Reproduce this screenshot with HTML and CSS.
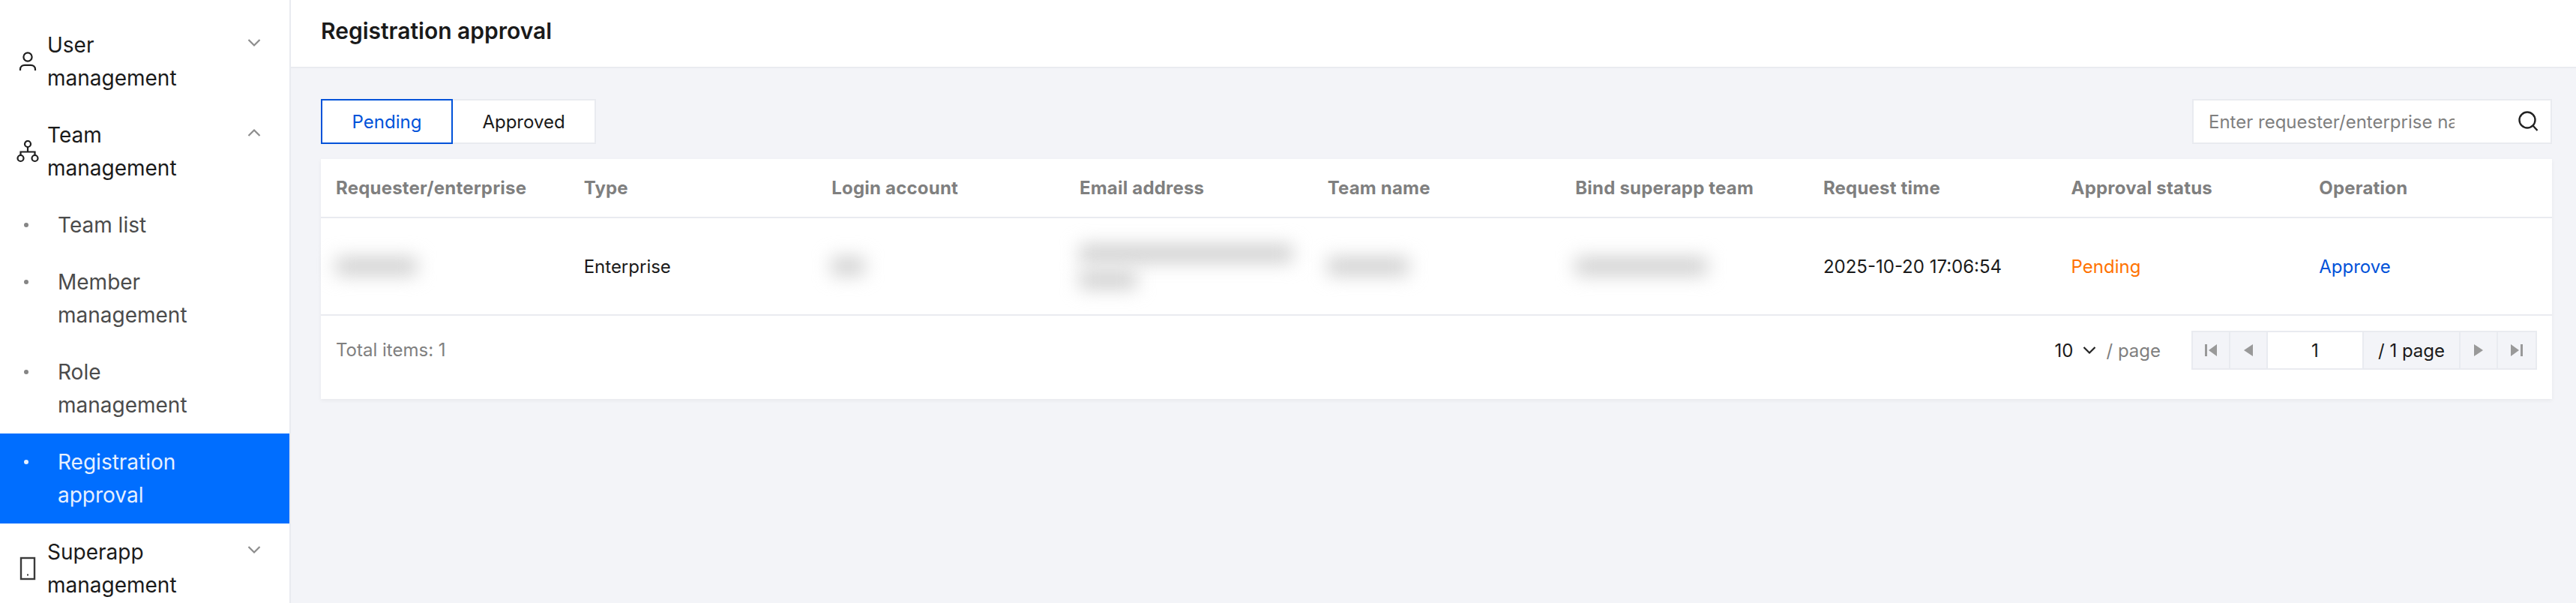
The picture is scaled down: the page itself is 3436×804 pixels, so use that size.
FILE: index.html
```html
<!DOCTYPE html>
<html lang="en">
<head>
  <meta charset="UTF-8" />
  <title>Registration approval</title>
  <link rel="stylesheet" href="styles.css">
</head>
<body>
  <div class="layout">
    <aside class="sidebar">
      <div class="group">
        <svg class="groupIcon" width="28" height="28" viewBox="0 0 28 28" fill="none" stroke="#1f1f1f" stroke-width="2.2"><circle cx="14" cy="8" r="5.6"/><path d="M4 26v-1.5c0-3.6 2.6-5.6 6-5.6h8c3.4 0 6 2 6 5.6V26"/></svg>
        <span class="groupText">User management</span>
        <svg class="chevron" width="18" height="12" viewBox="0 0 18 12" fill="none" stroke="#8c8c8c" stroke-width="2.2"><path d="M1.5 2l7.5 7.500L16.500 2"/></svg>
      </div>
      <div class="group">
        <svg class="groupIcon" width="30" height="30" viewBox="0 0 30 30" fill="none" stroke="#1f1f1f" stroke-width="2.2"><circle cx="15" cy="5" r="4"/><circle cx="5.500" cy="24" r="4"/><circle cx="24.500" cy="24" r="4"/><path d="M15 9v6M5.500 20v-4.500h19V20"/></svg>
        <span class="groupText">Team management</span>
        <svg class="chevron" width="18" height="12" viewBox="0 0 18 12" fill="none" stroke="#8c8c8c" stroke-width="2.2"><path d="M1.500 10L9 2.500l7.500 7.500"/></svg>
      </div>
      <div class="subItem"><i class="dot"></i><span class="subText">Team list</span></div>
      <div class="subItem"><i class="dot"></i><span class="subText">Member management</span></div>
      <div class="subItem"><i class="dot"></i><span class="subText">Role management</span></div>
      <div class="subItem active"><i class="dot"></i><span class="subText">Registration approval</span></div>
      <div class="group">
        <svg class="groupIcon" width="28" height="32" viewBox="0 0 28 32" fill="none" stroke="#3a3a3a" stroke-width="2.400"><rect x="5" y="2" width="18" height="28"/><rect x="13" y="23.500" width="2" height="2" fill="#3a3a3a" stroke="none"/></svg>
        <span class="groupText">Superapp management</span>
        <svg class="chevron" width="18" height="12" viewBox="0 0 18 12" fill="none" stroke="#8c8c8c" stroke-width="2.2"><path d="M1.500 2l7.500 7.500L16.500 2"/></svg>
      </div>
    </aside>

    <main class="main">
      <header class="pageHeader"><h1>Registration approval</h1></header>
      <div class="content">
        <div class="toolbar">
          <div class="tabs">
            <button class="tab tabActive">Pending</button>
            <button class="tab">Approved</button>
          </div>
          <div class="search">
            <input class="searchInput" placeholder="Enter requester/enterprise name" />
            <svg width="32" height="32" viewBox="0 0 32 32" fill="none" stroke="#222" stroke-width="2.4"><circle cx="15" cy="14" r="10.500"/><path d="M22.500 21.500l6 6.500"/></svg>
          </div>
        </div>

        <div class="card">
          <table class="dataTable">
            <thead>
              <tr>
                <th>Requester/enterprise</th>
                <th>Type</th>
                <th>Login account</th>
                <th>Email address</th>
                <th>Team name</th>
                <th>Bind superapp team</th>
                <th>Request time</th>
                <th>Approval status</th>
                <th>Operation</th>
              </tr>
            </thead>
            <tbody>
              <tr>
                <td><span class="blur blurName"></span></td>
                <td>Enterprise</td>
                <td><span class="blur blurShort"></span></td>
                <td><span class="blur blurMail"></span><span class="blur blurMailEnd"></span></td>
                <td><span class="blur blurName"></span></td>
                <td><span class="blur blurTeam"></span></td>
                <td>2025-10-20 17:06:54</td>
                <td class="statusPending">Pending</td>
                <td><a class="link">Approve</a></td>
              </tr>
            </tbody>
          </table>
          <div class="tableFooter">
            <span class="total">Total items: 1</span>
            <div class="paging">
              <span class="pageSize">10</span>
              <svg class="sizeArrow" width="18" height="12" viewBox="0 0 18 12" fill="none" stroke="#222" stroke-width="2.2"><path d="M1.500 2l7.500 7.500L16.500 2"/></svg>
              <span class="perPage">/ page</span>
              <div class="pager">
                <span class="pageBtn"><svg width="16" height="18" viewBox="0 0 16 18" fill="#999"><rect width="3" height="16" y="1"/><path d="M16 1v16L5 9z"/></svg></span>
                <span class="pageBtn"><svg width="14" height="18" viewBox="0 0 14 18" fill="#999"><path d="M13 1v16L1 9z"/></svg></span>
                <input class="pageInput" value="1" />
                <span class="pageTotal">/ 1 page</span>
                <span class="pageBtn"><svg width="14" height="18" viewBox="0 0 14 18" fill="#999"><path d="M1 1v16l12-8z"/></svg></span>
                <span class="pageBtn"><svg width="16" height="18" viewBox="0 0 16 18" fill="#999"><rect x="13" y="1" width="3" height="16"/><path d="M0 1v16l11-8z"/></svg></span>
              </div>
            </div>
          </div>
        </div>
      </div>
    </main>
  </div>
</body>
</html>
```

FILE: styles.css
```css
/* Basic Reset */
* {
  box-sizing: border-box;
  margin: 0;
  padding: 0;
}
html, body {
  height: 100%;
  overflow: hidden;
}
body {
  font-family: Inter, "Liberation Sans", sans-serif;
  background-color: #f3f4f8;
  color: #1a1a1a;
}
.layout {
  display: flex;
  height: 804px;
}

/* Sidebar */
.sidebar {
  width: 388px;
  flex: none;
  padding-top: 22px;
  background-color: #fff;
  border-right: 2px solid #e9ebf0;
  overflow: hidden;
}
.group {
  display: flex;
  align-items: center;
  height: 120px;
  flex: none;
  padding: 0 38px 0 22px;
  font-size: 28px;
  line-height: 44px;
}
.groupIcon {
  flex: none;
  width: 30px;
  margin-right: 11px;
}
.groupText {
  flex: 1;
  max-width: 200px;
}
.chevron {
  flex: none;
  margin-left: auto;
  align-self: flex-start;
  margin-top: 29px;
}
.subItem {
  display: flex;
  align-items: flex-start;
  padding: 16px 40px 16px 32px;
  font-size: 28px;
  line-height: 44px;
  color: #4b4b4b;
}
.dot {
  flex: none;
  width: 6px;
  height: 6px;
  margin-top: 19px;
  margin-right: 39px;
  border-radius: 50%;
  background-color: #858585;
}
.subText {
  max-width: 200px;
}
.active {
  background-color: #006eff;
  color: #e6f0ff;
}
.active .dot {
  background-color: #e6f0ff;
}

/* Page header */
.main {
  flex: 1;
  min-width: 0;
}
.pageHeader {
  height: 91px;
  padding: 0 0 8px 40px;
  background-color: #fff;
  border-bottom: 2px solid #e9ebf0;
  display: flex;
  align-items: center;
}
h1 {
  font-size: 30px;
  font-weight: 600;
  color: #1a1a1a;
}
.content {
  padding: 41px 32px 0 40px;
}

/* Toolbar */
.toolbar {
  display: flex;
  justify-content: space-between;
  height: 60px;
  margin-bottom: 20px;
}
.tabs {
  display: flex;
}
.tab {
  height: 60px;
  width: 191px;
  font-family: inherit;
  font-size: 24px;
  background-color: #fff;
  color: #1a1a1a;
  border: 2px solid #e9ebf0;
  border-left: none;
}
.tabActive {
  width: 176px;
  color: #0052d9;
  border: 2px solid #0052d9;
}
.search {
  width: 480px;
  display: flex;
  align-items: center;
  padding: 0 14px 0 20px;
  background-color: #fff;
  border: 2px solid #e9ebf0;
}
.searchInput {
  width: 328px;
  margin-right: auto;
  border: none;
  outline: none;
  font-family: inherit;
  font-size: 24px;
  color: #1a1a1a;
}
.searchInput::placeholder {
  color: #7f7f7f;
  opacity: 1;
}

/* Table */
.card {
  background-color: #fff;
  box-shadow: 0 2px 6px rgba(0, 0, 0, 0.05);
}
.dataTable {
  width: 100%;
  table-layout: fixed;
  border-collapse: collapse;
  font-size: 24px;
}
th {
  height: 78px;
  padding: 0 20px;
  text-align: left;
  font-weight: 700;
  letter-spacing: 0.2px;
  color: #7f7f7f;
  border-bottom: 2px solid #e9ebf0;
  white-space: nowrap;
}
td {
  height: 130px;
  padding: 0 20px;
  border-bottom: 2px solid #e9ebf0;
  white-space: nowrap;
}
.statusPending {
  color: #ff7200;
}
.link {
  color: #0052d9;
}
.blur {
  display: block;
  height: 24px;
  background-color: #cfcfcf;
  filter: blur(12px);
}
.blurName {
  width: 108px;
}
.blurShort {
  width: 44px;
}
.blurTeam {
  width: 176px;
}
.blurMail {
  width: 284px;
  margin-bottom: 11px;
}
.blurMailEnd {
  width: 76px;
}

/* Footer */
.tableFooter {
  height: 111px;
  padding: 20px 20px 0;
  display: flex;
  justify-content: space-between;
  font-size: 24px;
}
.tableFooter > * {
  align-self: flex-start;
}
.total {
  line-height: 52px;
}
.total,
.perPage {
  color: #7f7f7f;
}
.paging {
  display: flex;
  align-items: center;
}
.sizeArrow {
  margin: 0 13px;
}
.pager {
  display: flex;
  height: 52px;
  margin-left: 41px;
  background-color: #f3f4f8;
  border: 2px solid #e9ebf0;
}
.pageBtn {
  width: 50px;
  display: flex;
  align-items: center;
  justify-content: center;
  border-right: 2px solid #e9ebf0;
}
.pageBtn:last-child {
  border-right: none;
}
.pageInput {
  width: 128px;
  border: none;
  border-right: 2px solid #e9ebf0;
  outline: none;
  text-align: center;
  font-family: inherit;
  font-size: 24px;
  color: #1a1a1a;
  background-color: #fff;
}
.pageTotal {
  width: 129px;
  display: flex;
  align-items: center;
  justify-content: center;
  border-right: 2px solid #e9ebf0;
}
```
